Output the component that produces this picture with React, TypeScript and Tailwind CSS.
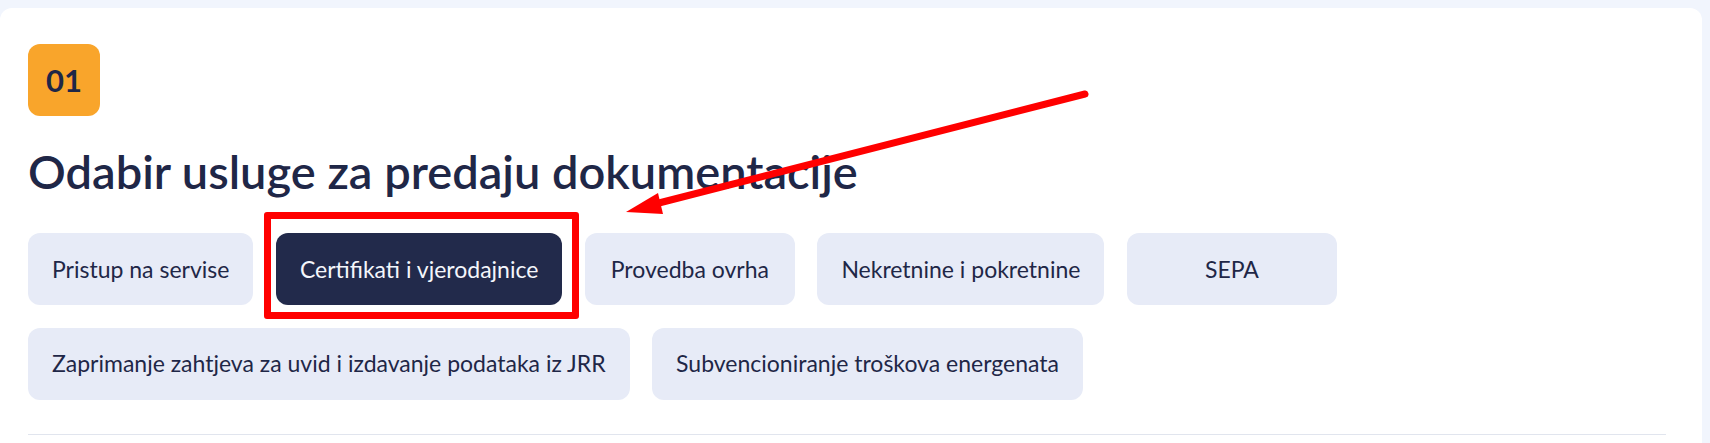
import React from 'react';

const services = [
  'Pristup na servise',
  'Certifikati i vjerodajnice',
  'Provedba ovrha',
  'Nekretnine i pokretnine',
  'SEPA',
  'Zaprimanje zahtjeva za uvid i izdavanje podataka iz JRR',
  'Subvencioniranje troškova energenata',
];

const active = 'Certifikati i vjerodajnice';

function ServiceButton({ label }: { label: string }) {
  const isActive = label === active;
  return (
    <button
      className={
        isActive
          ? 'h-[72px] min-w-[210px] px-6 rounded-xl bg-[#222a4b] text-[#f4f6fb] text-[23px] flex items-center justify-center'
          : 'h-[72px] min-w-[210px] px-6 rounded-xl bg-[#e7ebf7] text-[#1f2747] text-[23px] flex items-center justify-center'
      }
    >
      {label}
    </button>
  );
}

export default function App() {
  return (
    <div
      className="relative h-[443px] w-[1710px] overflow-hidden bg-[#f1f5fd] pt-2 pr-2"
      style={{ fontFamily: 'Lato, "Open Sans", sans-serif' }}
    >
      <div className="h-full bg-white rounded-t-xl pl-[28px] pr-[36px] pt-9">
        {/* step badge */}
        <div className="w-[72px] h-[72px] rounded-xl bg-[#f9a52b] flex items-center justify-center text-[31px] font-bold text-[#1e2747]">
          01
        </div>

        <h1 className="mt-[26px] text-[47px] leading-[58px] font-semibold text-[#1f2747]">
          Odabir usluge za predaju dokumentacije
        </h1>

        <div className="mt-[33px] flex flex-wrap gap-[22.5px]">
          {services.map((s) => (
            <ServiceButton key={s} label={s} />
          ))}
        </div>

        <div className="mt-[34px] border-t border-[#e1e5ee]" />
      </div>

      {/* annotation: red frame + arrow */}
      <div className="absolute left-[264px] top-[212px] w-[315px] h-[107px] border-[7px] border-[#ff0000] rounded-[3px] pointer-events-none" />
      <svg className="absolute left-0 top-0 pointer-events-none" width="1710" height="443">
        <line x1="1085" y1="94" x2="655" y2="204" stroke="#ff0000" strokeWidth="7" strokeLinecap="round" />
        <polygon points="626,212 658,193 663,214" fill="#ff0000" />
      </svg>
    </div>
  );
}
